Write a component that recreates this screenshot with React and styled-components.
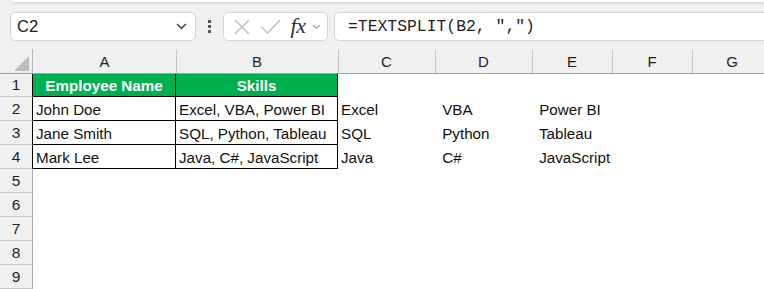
import React from 'react';
import styled, { createGlobalStyle } from 'styled-components';

const GlobalStyle = createGlobalStyle`
  html, body {
    margin: 0;
    padding: 0;
    background: #f0f0f0;
    overflow: hidden;
  }
  body {
    font-family: "Liberation Sans", Arial, sans-serif;
    color: #1f1f1f;
  }
`;

const Page = styled.div`
  width: 764px;
  height: 289px;
  overflow: hidden;
`;

const RibbonEdge = styled.div`
  height: 2px;
  margin-left: 12px;
  background: #fff;
  border-bottom-left-radius: 4px;
  box-shadow: 0 1px 3px rgba(0, 0, 0, 0.2);
`;

const FormulaRow = styled.div`
  display: flex;
  align-items: center;
  height: 29px;
  margin-top: 10px;
  padding-left: 10px;
`;

const Box = styled.div`
  box-sizing: border-box;
  height: 29px;
  background: #fff;
  border: 1px solid #d4d4d4;
  border-radius: 5px;
  display: flex;
  align-items: center;
`;

const NameBox = styled(Box)`
  width: 186px;
  padding: 0 8px 0 6px;
  justify-content: space-between;
  font-size: 16.5px;
  color: #202020;
`;

const Dots = styled.div`
  width: 27px;
  display: flex;
  flex-direction: column;
  align-items: center;
  gap: 2px;
  span {
    width: 3px;
    height: 3px;
    background: #555;
  }
`;

const ButtonGroup = styled(Box)`
  width: 105px;
  padding-left: 6px;
`;

const IconSlot = styled.div`
  width: ${p => p.$w}px;
  display: flex;
  align-items: center;
  justify-content: center;
`;

const Fx = styled.span`
  font-family: "Liberation Serif", "DejaVu Serif", serif;
  font-style: italic;
  font-size: 22px;
  line-height: 1;
  color: #2e2e2e;
  letter-spacing: -0.5px;
  margin-top: -2px;
`;

const FormulaInput = styled(Box)`
  flex: 1;
  margin-left: 6px;
  margin-right: -10px;
  padding-left: 13px;
  border-top-right-radius: 0;
  border-bottom-right-radius: 0;
  font-family: "Liberation Mono", "DejaVu Sans Mono", monospace;
  font-size: 16.4px;
  color: #1f1f1f;
  white-space: pre;
`;

const Sheet = styled.div`
  margin-top: 8px;
  display: grid;
  grid-template-columns: 33px 143px 162px 97px 97px 80px 80px 80px;
  grid-auto-rows: 24px;
  width: 772px;
`;

const Corner = styled.div`
  position: relative;
  height: 25px;
  box-sizing: border-box;
  border-right: 1px solid #b8b8b8;
  border-bottom: 1px solid #a0a0a0;
  &::after {
    content: '';
    position: absolute;
    right: 3px;
    bottom: 2px;
    width: 0;
    height: 0;
    border-left: 15px solid transparent;
    border-bottom: 15px solid #bdbdbd;
  }
`;

const ColHead = styled.div`
  height: 25px;
  box-sizing: border-box;
  border-bottom: 1px solid #a0a0a0;
  display: flex;
  align-items: center;
  justify-content: center;
  position: relative;
  font-size: 15px;
  color: #1f1f1f;
  padding-top: 1px;
  &::after {
    content: '';
    position: absolute;
    right: -1px;
    top: 1px;
    bottom: 0;
    width: 1px;
    background: #c4c4c4;
  }
`;

const RowHead = styled.div`
  box-sizing: border-box;
  border-right: 1px solid ${p => (p.$dark ? '#000' : '#a8a8a8')};
  border-bottom: 1px solid #c8c8c8;
  display: flex;
  align-items: center;
  justify-content: center;
  font-size: 15.5px;
  color: #1f1f1f;
  padding-top: 1px;
`;

const Cell = styled.div`
  box-sizing: border-box;
  background: ${p => (p.$head ? '#00b050' : '#fff')};
  color: ${p => (p.$head ? '#fff' : '#111')};
  font-weight: ${p => (p.$head ? 700 : 400)};
  border-right: 1px solid ${p => (p.$table ? '#000' : '#fff')};
  border-bottom: 1px solid ${p => (p.$table ? '#000' : '#fff')};
  display: flex;
  align-items: center;
  justify-content: ${p => (p.$head ? 'center' : 'flex-start')};
  padding: 1px 0 0 ${p => (p.$head ? 0 : 3)}px;
  font-size: 15.2px;
  white-space: pre;
`;

const ChevronDown = ({ size = 12, color = '#444', width = 1.4 }) => (
  <svg width={size} height={size * 0.6} viewBox="0 0 10 6">
    <polyline points="1,1 5,5 9,1" fill="none" stroke={color} strokeWidth={width} />
  </svg>
);

const columns = ['A', 'B', 'C', 'D', 'E', 'F', 'G'];

const rows = [
  ['Employee Name', 'Skills', '', '', '', '', ''],
  ['John Doe', 'Excel, VBA, Power BI', 'Excel', ' VBA', ' Power BI', '', ''],
  ['Jane Smith', 'SQL, Python, Tableau', 'SQL', ' Python', ' Tableau', '', ''],
  ['Mark Lee', 'Java, C#, JavaScript', 'Java', ' C#', ' JavaScript', '', ''],
  ['', '', '', '', '', '', ''],
  ['', '', '', '', '', '', ''],
  ['', '', '', '', '', '', ''],
  ['', '', '', '', '', '', ''],
  ['', '', '', '', '', '', ''],
];

const App = () => (
  <>
    <GlobalStyle />
    <Page>
      <RibbonEdge />
      <FormulaRow>
        <NameBox>
          <span>C2</span>
          <ChevronDown size={11} color="#3a3a3a" width={1.3} />
        </NameBox>
        <Dots>
          <span />
          <span />
          <span />
        </Dots>
        <ButtonGroup>
          <IconSlot $w={24}>
            <svg width="16" height="16" viewBox="0 0 16 16">
              <path d="M1 1 L15 15 M15 1 L1 15" stroke="#bdbdbd" strokeWidth="1.4" fill="none" />
            </svg>
          </IconSlot>
          <IconSlot $w={32}>
            <svg width="21" height="15" viewBox="0 0 21 15">
              <polyline points="1,7.5 7.5,14 20,1" fill="none" stroke="#bdbdbd" strokeWidth="1.4" />
            </svg>
          </IconSlot>
          <IconSlot $w={24}>
            <Fx>fx</Fx>
          </IconSlot>
          <IconSlot $w={12}>
            <ChevronDown size={9} color="#9a9a9a" width={1.2} />
          </IconSlot>
        </ButtonGroup>
        <FormulaInput>=TEXTSPLIT(B2, ",")</FormulaInput>
      </FormulaRow>
      <Sheet>
        <Corner />
        {columns.map(c => (
          <ColHead key={c}>{c}</ColHead>
        ))}
        {rows.map((row, r) => (
          <React.Fragment key={r}>
            <RowHead $dark={r < 4}>{r + 1}</RowHead>
            {row.map((v, c) => (
              <Cell key={c} $head={r === 0 && c < 2} $table={r < 4 && c < 2}>
                {v}
              </Cell>
            ))}
          </React.Fragment>
        ))}
      </Sheet>
    </Page>
  </>
);

export default App;
